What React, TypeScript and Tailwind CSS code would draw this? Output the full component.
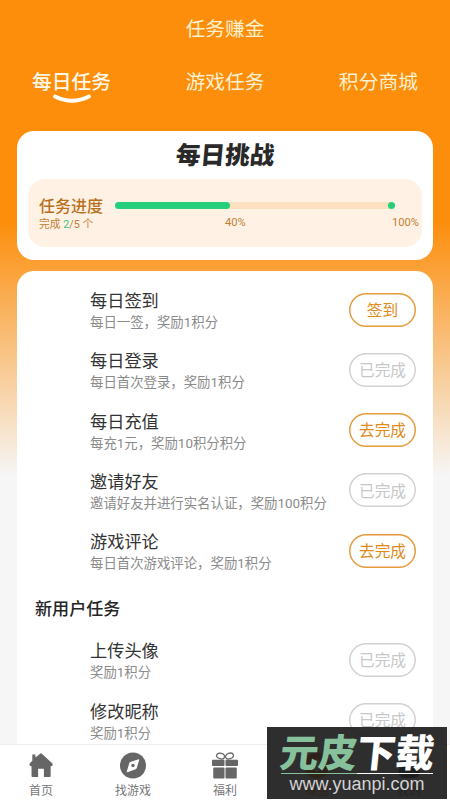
import { clsx } from "clsx"

interface Task {
  title: string
  desc: string
  action: string
  done?: boolean
}

const dailyTasks: Task[] = [
  { title: "每日签到", desc: "每日一签，奖励1积分", action: "签到" },
  { title: "每日登录", desc: "每日首次登录，奖励1积分", action: "已完成", done: true },
  { title: "每日充值", desc: "每充1元，奖励10积分积分", action: "去完成" },
  { title: "邀请好友", desc: "邀请好友并进行实名认证，奖励100积分", action: "已完成", done: true },
  { title: "游戏评论", desc: "每日首次游戏评论，奖励1积分", action: "去完成" },
]

const newUserTasks: Task[] = [
  { title: "上传头像", desc: "奖励1积分", action: "已完成", done: true },
  { title: "修改昵称", desc: "奖励1积分", action: "已完成", done: true },
]

function TaskRow({ task }: { task: Task }) {
  return (
    <div className="flex h-[60.3px] items-start justify-between pl-[73px] pr-[17px]">
      <div className="whitespace-nowrap">
        <h4 className="text-[17.2px] leading-[24px] text-[#333]">{task.title}</h4>
        <p className="text-[13.4px] leading-[20px] text-[#8b8b8b]">{task.desc}</p>
      </div>
      <button
        className={clsx(
          "mt-[3.5px] h-[34px] w-[67px] rounded-full pt-[2px] text-[15.7px] leading-none",
          task.done
            ? "text-[#c8c8c8] shadow-[inset_0_0_0_1.5px_#d2d2d2]"
            : "text-[#e08a1c] shadow-[inset_0_0_0_1.5px_#e69a3c]"
        )}
      >
        {task.action}
      </button>
    </div>
  )
}

function HomeIcon() {
  return (
    <svg width="26" height="28" viewBox="0 0 26 28" fill="#666">
      <path d="M4 2.6 L7.2 2.6 L7.2 5.6 L12.4 1.6 Q13 1.2 13.6 1.6 L24.6 11.6 Q25.6 12.8 24.6 14.6 L23 14.8 L23 25 Q23 26 22 26 L16 26 L16 17.4 L10 17.4 L10 26 L4.4 26 Q3.2 26 3.2 25 L3.2 14.8 L1.6 14.6 Q0.6 12.8 1.4 11.6 L4 9 Z" />
    </svg>
  )
}

function CompassIcon() {
  return (
    <svg width="28" height="28" viewBox="0 0 28 28">
      <circle cx="14" cy="14" r="13.5" fill="#666" />
      <path d="M20 8 L17.2 17.2 L8 20.6 L10.8 11 Z" fill="#fff" stroke="#fff" strokeLinejoin="round" />
      <circle cx="14" cy="14" r="1.7" fill="#666" />
    </svg>
  )
}

function GiftIcon() {
  return (
    <svg width="28" height="28" viewBox="0 0 28 28" fill="#666">
      <ellipse cx="9.4" cy="4.2" rx="4.2" ry="2.9" transform="rotate(18 9.4 4.2)" fill="none" stroke="#666" strokeWidth="1.3" />
      <ellipse cx="18.6" cy="4.2" rx="4.2" ry="2.9" transform="rotate(-18 18.6 4.2)" fill="none" stroke="#666" strokeWidth="1.3" />
      <rect x="0.5" y="8" width="13" height="6.5" rx="1" />
      <rect x="14.5" y="8" width="13" height="6.5" rx="1" />
      <rect x="1.8" y="16" width="11.7" height="11.5" rx="1" />
      <rect x="14.5" y="16" width="11.7" height="11.5" rx="1" />
    </svg>
  )
}

function CoinIcon() {
  return (
    <svg width="28" height="28" viewBox="0 0 28 28">
      <circle cx="14" cy="14" r="13.5" fill="#fa6c06" />
      <path d="M14 7 L21 14 L14 21 L7 14 Z" fill="#fff" />
    </svg>
  )
}

function UserIcon() {
  return (
    <svg width="28" height="28" viewBox="0 0 28 28" fill="#333">
      <circle cx="14" cy="7" r="6" />
      <rect x="3" y="15" width="22" height="12" rx="6" />
    </svg>
  )
}

const navItems = [
  { label: "首页", icon: <HomeIcon /> },
  { label: "找游戏", icon: <CompassIcon /> },
  { label: "福利", icon: <GiftIcon /> },
  { label: "赚金", icon: <CoinIcon />, active: true },
  { label: "我的", icon: <UserIcon /> },
]

function Watermark() {
  return (
    <div className="absolute left-[267px] top-[727px] flex h-[72px] w-[180px] flex-col items-center bg-[#1c1c1c]/92">
      <div className="mt-[8px] flex h-[38px] -skew-x-[6deg] items-center whitespace-nowrap text-[38.5px] font-black leading-[38px]">
        <span className="text-[#87c19b]">元皮</span>
        <span className="text-white">下载</span>
      </div>
      <div className="flex h-px w-[152px]">
        <div className="flex-1 bg-[#87c19b]" />
        <div className="flex-1 bg-white" />
      </div>
      <div className="font-['Liberation_Sans',sans-serif] text-[18px] leading-[21px] text-[#d4d4d4]">www.yuanpi.com</div>
    </div>
  )
}

export default function App() {
  return (
    <div className="relative flex h-[800px] w-[450px] flex-col overflow-hidden bg-[linear-gradient(to_bottom,#fc8e0c_0px,#fc8e0c_222px,#f6f6f6_476px)] font-[Roboto,'Noto_Sans_CJK_SC',sans-serif]">
      <header className="shrink-0 text-[#fff0cf]">
        <h1 className="pt-[15px] text-center text-[19.7px] leading-[30px]">任务赚金</h1>
        <div className="flex h-[85.5px] justify-between px-[32px] pt-[23px] text-[19.8px] leading-[30px]">
          <div className="flex flex-col items-center font-medium text-[#fff8e8]">
            每日任务
            <svg className="-mt-[5px]" width="40" height="12" viewBox="0 0 40 12">
              <path d="M3 3.5 Q20 12 37 3.5" fill="none" stroke="#fffdf5" strokeWidth="3.8" strokeLinecap="round" />
            </svg>
          </div>
          <div>游戏任务</div>
          <div>积分商城</div>
        </div>
      </header>

      <section className="mx-[17px] h-[129px] shrink-0 rounded-[17px] bg-white px-[11px]">
        <div className="flex h-[48.5px] justify-center">
          <h2 className="-skew-x-[5deg] text-[24.6px] font-black leading-[49px] text-[#292929]">每日挑战</h2>
        </div>
        <div className="flex h-[68px] rounded-[17px] bg-[#fff2e4] pl-[11px] text-[#c08035]">
          <div className="w-[76px] shrink-0 pt-[16px]">
            <div className="text-[16px] font-medium leading-[23px] text-[#b8701c]">任务进度</div>
            <div className="whitespace-nowrap text-[10.8px] leading-[14px]">
              完成 <span className="text-[#3bc583]">2</span>/5 个
            </div>
          </div>
          <div className="w-[280px] pt-[23px]">
            <div className="flex h-[7px] items-center rounded-full bg-[#fce0bf]">
              <div className="h-[6.5px] w-[115px] rounded-full bg-[#26cf7c]" />
              <div className="ml-auto size-[7px] rounded-full bg-[#26cf7c]" />
            </div>
            <div className="flex justify-between pl-[110px] pt-[6.5px] text-[11.2px] leading-[14px]">
              <span>40%</span>
              <span className="-mr-[24px]">100%</span>
            </div>
          </div>
        </div>
      </section>

      <section className="mx-[17px] mt-[11.5px] min-h-0 flex-1 overflow-hidden rounded-t-[17px] bg-white pt-[18px]">
        {dailyTasks.map((task) => (
          <TaskRow key={task.title} task={task} />
        ))}
        <h3 className="h-[49px] pl-[18px] pt-[6px] text-[17.1px] font-medium leading-[26px] text-[#252525]">新用户任务</h3>
        {newUserTasks.map((task) => (
          <TaskRow key={task.title} task={task} />
        ))}
      </section>

      <nav className="flex h-[56px] shrink-0 gap-[10px] border-t border-[#eee] bg-white">
        {navItems.map((item) => (
          <div key={item.label} className="flex w-[82px] flex-col items-center pt-[7px]">
            {item.icon}
            <span className={clsx("mt-[3px] text-[12px] leading-[18px]", item.active ? "text-[#fa6c06]" : "text-[#777]")}>
              {item.label}
            </span>
          </div>
        ))}
      </nav>

      <Watermark />
    </div>
  )
}
